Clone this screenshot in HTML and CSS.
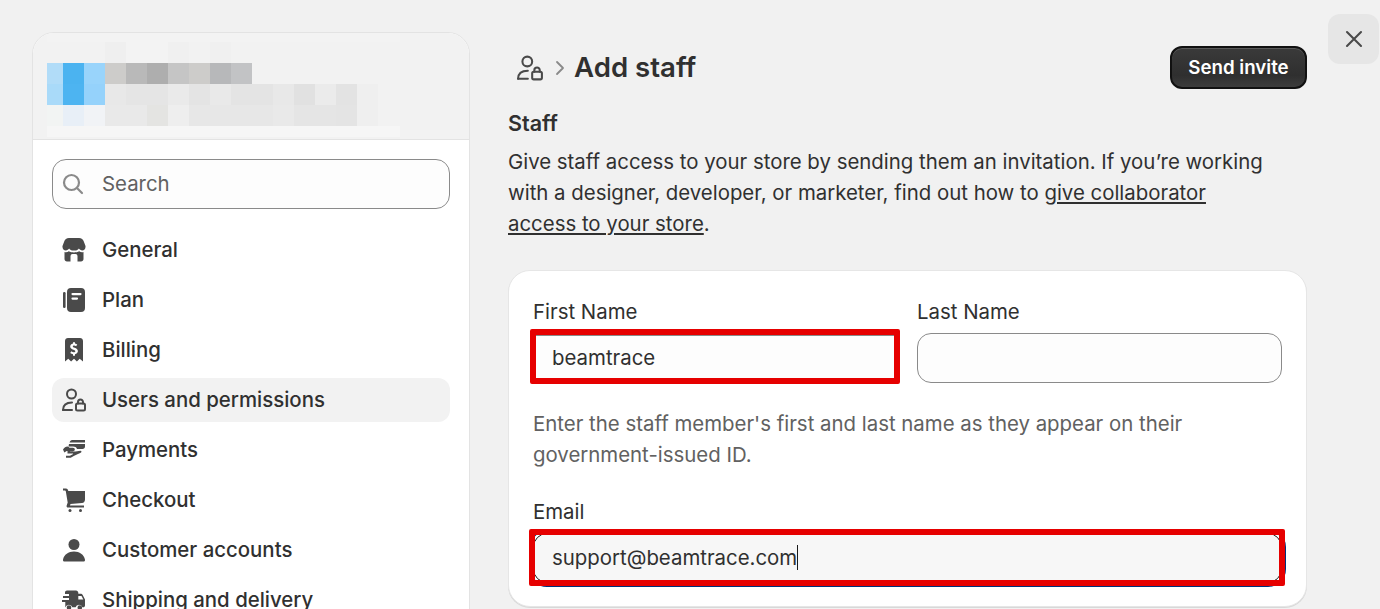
FILE: index.html
```html
<!DOCTYPE html>
<html lang="en">
<head>
    <meta charset="UTF-8">
    <meta name="viewport" content="width=device-width, initial-scale=1.0">
    <title>Add staff</title>
    <link rel="stylesheet" href="styles.css">
</head>
<body>
    <div class="page">
        <!-- Left side: store header and settings menu -->
        <aside class="sidebar">
            <div class="store">
                <svg class="store-mosaic" width="353" height="104" viewBox="47 33 353 104" shape-rendering="crispEdges">
                    <rect x="47" y="33" width="353" height="104" fill="#f2f2f2"/>
                    <rect x="47" y="33" width="353" height="9" fill="#f3f3f3"/>
                    <rect x="105" y="42" width="21" height="21" fill="#efefef"/>
                    <rect x="126" y="42" width="42" height="21" fill="#f3f3f3"/>
                    <rect x="168" y="42" width="21" height="21" fill="#f0f0f0"/>
                    <rect x="210" y="42" width="21" height="21" fill="#f0f0f0"/>
                    <rect x="47" y="63" width="16" height="21" fill="#b1dcf8"/>
                    <rect x="63" y="63" width="21" height="21" fill="#4bb3f0"/>
                    <rect x="84" y="63" width="21" height="21" fill="#99d4fb"/>
                    <rect x="105" y="63" width="21" height="21" fill="#cdccca"/>
                    <rect x="126" y="63" width="21" height="21" fill="#b9b9b9"/>
                    <rect x="147" y="63" width="21" height="21" fill="#aeaeae"/>
                    <rect x="168" y="63" width="21" height="21" fill="#c5c5c5"/>
                    <rect x="189" y="63" width="21" height="21" fill="#cdccca"/>
                    <rect x="210" y="63" width="21" height="21" fill="#b7b8ba"/>
                    <rect x="231" y="63" width="21" height="21" fill="#c2c3c5"/>
                    <rect x="47" y="84" width="16" height="21" fill="#a9daf9"/>
                    <rect x="63" y="84" width="21" height="21" fill="#4db4f1"/>
                    <rect x="84" y="84" width="21" height="21" fill="#95d2fb"/>
                    <rect x="105" y="84" width="21" height="21" fill="#e8e8e8"/>
                    <rect x="126" y="84" width="42" height="21" fill="#e5e5e5"/>
                    <rect x="168" y="84" width="21" height="21" fill="#eaeaea"/>
                    <rect x="189" y="84" width="21" height="21" fill="#e4e4e4"/>
                    <rect x="210" y="84" width="21" height="21" fill="#e9e9e9"/>
                    <rect x="231" y="84" width="42" height="21" fill="#e4e4e4"/>
                    <rect x="273" y="84" width="21" height="21" fill="#e8e8e8"/>
                    <rect x="294" y="84" width="21" height="21" fill="#e1e1e1"/>
                    <rect x="315" y="84" width="21" height="21" fill="#ebebeb"/>
                    <rect x="336" y="84" width="21" height="21" fill="#e3e3e3"/>
                    <rect x="357" y="84" width="21" height="21" fill="#efefef"/>
                    <rect x="47" y="105" width="16" height="21" fill="#f2f4f3"/>
                    <rect x="63" y="105" width="21" height="21" fill="#e8eff7"/>
                    <rect x="84" y="105" width="21" height="21" fill="#f1f3f6"/>
                    <rect x="105" y="105" width="42" height="21" fill="#e9e9e9"/>
                    <rect x="147" y="105" width="21" height="21" fill="#e4e4e2"/>
                    <rect x="168" y="105" width="21" height="21" fill="#eeeeee"/>
                    <rect x="189" y="105" width="84" height="21" fill="#e7e7e7"/>
                    <rect x="273" y="105" width="21" height="21" fill="#e9e9e9"/>
                    <rect x="294" y="105" width="42" height="21" fill="#e5e5e5"/>
                    <rect x="336" y="105" width="21" height="21" fill="#e4e4e4"/>
                    <rect x="357" y="105" width="21" height="21" fill="#efefef"/>
                    <rect x="47" y="126" width="353" height="11" fill="#f6f6f6"/>
                </svg>
            </div>
            <div class="sidebar-body">
                <div class="search">
                    <svg class="search-icon" width="24" height="24" viewBox="0 0 24 24" fill="none" stroke="#8a8a8a" stroke-width="2.200" stroke-linecap="round">
                        <circle cx="10.500" cy="11.500" r="7.500"/>
                        <path d="M16 17l5 5"/>
                    </svg>
                    <span>Search</span>
                </div>
                <nav class="menu">
                    <a class="menu-item" href="#">
                        <svg width="24" height="24" viewBox="0 0 24 24" fill="#4a4a4a">
                            <path fill-rule="evenodd" d="M7 0h10c2.500 0 4 1.500 4.800 3.500L23.500 8c.3 2.700-1.200 4.400-3.300 4.400-1.400 0-2.600-.7-3.300-1.800-.7 1.100-1.800 1.800-3 1.800h-3.800c-1.200 0-2.300-.7-3-1.800-.7 1.100-1.900 1.800-3.300 1.800C1.700 12.400.2 10.700.5 8l1.700-4.500C3 1.500 4.500 0 7 0zM2.500 14c1.300.4 3.200.2 4.300-.7 1.400 1 3.300 1.100 5.200 1.100s3.800-.1 5.200-1.100c1.100.9 3 1.100 4.300.7v7c0 1.500-1.100 2.500-2.500 2.500h-3.500V18a2 2 0 0 0-2-2h-3a2 2 0 0 0-2 2v5.500H5c-1.400 0-2.500-1-2.500-2.500z"/>
                        </svg>
                        General
                    </a>
                    <a class="menu-item" href="#">
                        <svg width="24" height="24" viewBox="0 0 24 24" fill="#4a4a4a">
                            <rect x="1" y="4" width="2.600" height="16" rx="1.200"/>
                            <path fill-rule="evenodd" d="M9 0h10a4 4 0 0 1 4 4v16a4 4 0 0 1-4 4H9a4 4 0 0 1-4-4V4a4 4 0 0 1 4-4zm1.500 5a1 1 0 0 0 0 2.200h8a1 1 0 0 0 0-2.200zm0 4.500a1 1 0 0 0 0 2.200h4.500a1 1 0 0 0 0-2.200z"/>
                        </svg>
                        Plan
                    </a>
                    <a class="menu-item" href="#">
                        <svg width="24" height="24" viewBox="0 0 24 24" fill="#4a4a4a">
                            <path fill-rule="evenodd" d="M6 0h12c1.700 0 3 1.300 3 3v20.500l-3.300-2.700-2.800 2.700-2.900-2.700-2.900 2.700-2.800-2.700L3 23.500V3c0-1.700 1.300-3 3-3zm6 4a1 1 0 0 0-1 1v.500c-1.700.3-2.800 1.500-2.800 3 0 1.800 1.500 2.700 3.100 3.300 1.400.5 2 .8 2 1.400 0 .6-.6 1-1.500 1-.9 0-1.700-.3-2.400-.9l-1.200 1.600c.8.700 1.800 1.100 2.800 1.300v.8a1 1 0 0 0 2 0v-.8c1.800-.3 2.900-1.500 2.900-3.100 0-1.900-1.500-2.800-3.200-3.400-1.300-.5-1.900-.8-1.900-1.300 0-.5.500-.9 1.300-.9.700 0 1.400.2 2 .7l1.200-1.600c-.6-.5-1.400-.9-2.300-1.100V5a1 1 0 0 0-1-1z"/>
                        </svg>
                        Billing
                    </a>
                    <a class="menu-item menu-item-active" href="#">
                        <svg class="icon-users" width="24" height="24" viewBox="0 0 24 24" fill="none" stroke="#4a4a4a" stroke-width="2" stroke-linecap="round" stroke-linejoin="round">
                            <circle cx="9.500" cy="6" r="4.500"/>
                            <path d="M1 22c0-4.500 3-7.500 9-7.500"/>
                            <path d="M1 22h9"/>
                            <rect x="14" y="15.500" width="9" height="7" rx="1.500"/>
                            <path d="M16 15.500V14a2.500 2.500 0 0 1 5 0v1.500"/>
                        </svg>
                        Users and permissions
                    </a>
                    <a class="menu-item" href="#">
                        <svg width="24" height="24" viewBox="0 0 24 24" fill="#4a4a4a">
                            <path d="M8 3.500C8.500 2.500 9.500 2 10.500 2H23v2.500H7.500zM7 6h16v2.500c0 1.500-1 2.500-2.500 2.500H15c-.6-1.800-2-2.500-4-2.500H6.500z"/>
                            <path d="M1 11.500C3 8.500 6 7.500 7.500 9.800h3.300c2.700 0 2.700 3.500 0 3.500H8v.2h5.500l5-.7c1.200 0 1.300 1.600.2 2l-6.500 3-3.500 2H4v-2h4l3.200-1.800-.2-.5H5.500v-2.500c-1.200 0-2 .5-3.200 1.600z"/>
                        </svg>
                        Payments
                    </a>
                    <a class="menu-item" href="#">
                        <svg width="24" height="24" viewBox="0 0 24 24" fill="#4a4a4a">
                            <path d="M1 .500h3a2 2 0 0 1 2 1.500l.300 1H23v8.500c0 2-1.200 3.300-3 3.500l-11.500 1-.5 1.500h14v2H6c-1 0-1.600-.8-1.400-1.800l1.100-3.200L3.800 3.300c-.1-.5-.4-.8-.9-.8H1z"/>
                            <circle cx="8" cy="22.500" r="1.500"/>
                            <circle cx="18.500" cy="22.500" r="1.500"/>
                        </svg>
                        Checkout
                    </a>
                    <a class="menu-item" href="#">
                        <svg width="24" height="24" viewBox="0 0 24 24" fill="#4a4a4a">
                            <circle cx="12" cy="6.500" r="5.500"/>
                            <path d="M2.500 23.500c-1 0-1.700-.8-1.500-1.800C2 16.500 6.500 13.500 12 13.500s10 3 11 8.200c.2 1-.5 1.800-1.500 1.800z"/>
                        </svg>
                        Customer accounts
                    </a>
                    <a class="menu-item" href="#">
                        <svg width="24" height="24" viewBox="0 0 24 24" fill="#4a4a4a">
                            <path fill-rule="evenodd" d="M5 2.500h9c1.300 0 2.300 1 2.300 2.300v1h2.200c1 0 1.800.5 2.200 1.300l2.300 4.400v6c0 1-.8 1.800-1.800 1.800h-.8a3.500 3.500 0 0 0-6.800 0H10.300a3.500 3.500 0 0 0-6.800 0H3.300V14H0v-2h7v-2H1V8h6V6H3V4.500c0-1.100.9-2 2-2zm11.300 5.500v3.500h5l-1.800-3.500z"/>
                            <circle cx="7" cy="19.500" r="2.300"/>
                            <circle cx="17.800" cy="19.500" r="2.300"/>
                        </svg>
                        Shipping and delivery
                    </a>
                </nav>
            </div>
        </aside>

        <!-- Right side: the invite form -->
        <main class="content">
            <header class="content-header">
                <div class="crumbs">
                    <svg class="icon-users" width="26" height="26" viewBox="0 0 24 24" fill="none" stroke="#4a4a4a" stroke-width="1.900" stroke-linecap="round" stroke-linejoin="round">
                        <circle cx="9.500" cy="6" r="4.500"/>
                        <path d="M1 22c0-4.500 3-7.500 9-7.500"/>
                        <path d="M1 22h9"/>
                        <rect x="14" y="15.500" width="9" height="7" rx="1.500"/>
                        <path d="M16 15.500V14a2.500 2.500 0 0 1 5 0v1.500"/>
                    </svg>
                    <svg width="10" height="16" viewBox="0 0 10 16" fill="none" stroke="#8a8a8a" stroke-width="1.800" stroke-linecap="round" stroke-linejoin="round">
                        <path d="M2 2l6 6-6 6"/>
                    </svg>
                    <h1>Add staff</h1>
                </div>
                <button class="send-button">Send invite</button>
            </header>

            <section class="intro">
                <h2>Staff</h2>
                <p>Give staff access to your store by sending them an invitation. If you’re working with a designer, developer, or marketer, find out how to <a href="#">give collaborator access to your store</a>.</p>
            </section>

            <form class="card">
                <div class="name-row">
                    <div class="field">
                        <label for="firstName">First Name</label>
                        <div class="marked">
                            <input id="firstName" class="input-marked" type="text" value="beamtrace">
                            <span class="mark"></span>
                        </div>
                    </div>
                    <div class="field">
                        <label for="lastName">Last Name</label>
                        <input id="lastName" type="text">
                    </div>
                </div>
                <p class="hint">Enter the staff member's first and last name as they appear on their government-issued ID.</p>
                <div class="field">
                    <label>Email</label>
                    <div class="marked">
                        <div class="fake-input fake-input-focus">support@beamtrace.com<span class="caret"></span></div>
                        <span class="mark mark-email"></span>
                    </div>
                </div>
            </form>
        </main>

        <button class="close-button" aria-label="Close">
            <svg width="20" height="20" viewBox="0 0 20 20" fill="none" stroke="#4a4a4a" stroke-width="2.100" stroke-linecap="round">
                <path d="M3 3l14 14M17 3L3 17"/>
            </svg>
        </button>
    </div>
</body>
</html>
```

FILE: styles.css
```css
* {
    box-sizing: border-box;
}
html, body {
    height: 100%;
    margin: 0;
    overflow: hidden;
}
body {
    font-family: Inter, "Noto Sans", sans-serif;
    font-size: 20.4px;
    color: #303030;
    background-color: #f1f1f1;
}
.page {
    position: relative;
    display: flex;
    gap: 38px;
    height: 100%;
    padding: 32px 0 0 32px;
}

/* Sidebar */
.sidebar {
    flex: none;
    width: 438px;
    height: 640px;
    background-color: #fff;
    border: 1px solid #e3e3e3;
    border-radius: 22px;
    overflow: hidden;
}
.store {
    height: 107px;
    padding-left: 14px;
    background-color: #f2f2f2;
    border-bottom: 1px solid #e3e3e3;
}
.store-mosaic {
    display: block;
}
.sidebar-body {
    padding: 19px 19px 0;
}
.search {
    display: flex;
    align-items: center;
    gap: 17px;
    height: 50px;
    padding: 0 0 2px 8px;
    background-color: #fdfdfd;
    border: 1px solid #8a8a8a;
    border-radius: 14px;
    color: #616161;
}
.menu {
    display: flex;
    flex-direction: column;
    gap: 6px;
    margin-top: 19px;
}
.menu-item {
    display: flex;
    align-items: center;
    gap: 16px;
    height: 44px;
    padding: 0 0 2px 10px;
    border-radius: 12px;
    color: #303030;
    font-weight: 500;
    text-decoration: none;
}
.menu-item svg {
    flex: none;
    margin-top: 2px;
}
.menu-item-active {
    background-color: #f2f2f2;
}

/* Right part */
.content {
    flex: none;
    width: 799px;
}
.content-header {
    display: flex;
    align-items: center;
    justify-content: space-between;
    height: 43px;
    margin-top: 14px;
}
.crumbs {
    display: flex;
    align-items: center;
    gap: 12px;
    padding-left: 9px;
}
.crumbs h1 {
    margin: 0 0 2px -3px;
    font-size: 27.6px;
    font-weight: 600;
}
.send-button {
    width: 137px;
    height: 43px;
    padding: 0;
    font-family: inherit;
    font-size: 18.7px;
    font-weight: 600;
    color: #fff;
    background: linear-gradient(#3a3a3a, #2f2f2f 70%, #3c3c3c);
    border: 2px solid #111;
    border-radius: 12px;
    box-shadow: inset 0 1px 0 #5a5a5a;
}
.intro {
    margin-top: 19px;
}
.intro h2 {
    margin: 0;
    font-size: 21.500px;
    font-weight: 600;
    line-height: 30px;
}
.intro p {
    max-width: 765px;
    margin: 8px 0 0;
    line-height: 31px;
}
.intro a {
    color: #303030;
}
.card {
    height: 337px;
    margin-top: 31px;
    padding: 26px 24px 0;
    background-color: #fff;
    border: 1px solid #e6e6e6;
    border-radius: 22px;
    box-shadow: 0 1px 0 #d8d8d8;
}
.name-row {
    display: grid;
    grid-template-columns: 364px 365px;
    gap: 20px;
}
.field {
    display: flex;
    flex-direction: column;
    gap: 6px;
}
.field label {
    line-height: 30px;
}
.field input, .fake-input {
    display: block;
    width: 100%;
    height: 50px;
    padding: 0 18px 2px;
    font-family: inherit;
    font-size: 20.4px;
    color: #303030;
    background-color: #fdfdfd;
    border: 1px solid #8a8a8a;
    border-radius: 14px;
}
.field .input-marked {
    border-radius: 3px;
}
.fake-input {
    display: flex;
    align-items: center;
}
.fake-input-focus {
    background-color: #f7f7f7;
    border-color: #1a1a1a;
    outline: 2px solid #00307a;
    outline-offset: 2px;
}
.caret {
    width: 1px;
    height: 25px;
    background-color: #1a1a1a;
}
.hint {
    margin: 25px 0 0;
    line-height: 31px;
    color: #616161;
}
.card > .field {
    margin-top: 27px;
}

/* Red annotation boxes around the inputs */
.marked {
    position: relative;
}
.mark {
    position: absolute;
    inset: -4px -3px -1px -3px;
    border: 6px solid #e60000;
    border-radius: 2px;
    box-shadow: inset 0 1px 0 #8a8a8a;
    pointer-events: none;
}
.mark-email {
    inset: -4px -3px -3px -4px;
    box-shadow: none;
}
.close-button {
    position: absolute;
    top: 14px;
    right: 1px;
    display: flex;
    align-items: center;
    justify-content: center;
    width: 51px;
    height: 50px;
    padding: 0;
    background-color: #e6e6e6;
    border: none;
    border-radius: 12px;
}
```
